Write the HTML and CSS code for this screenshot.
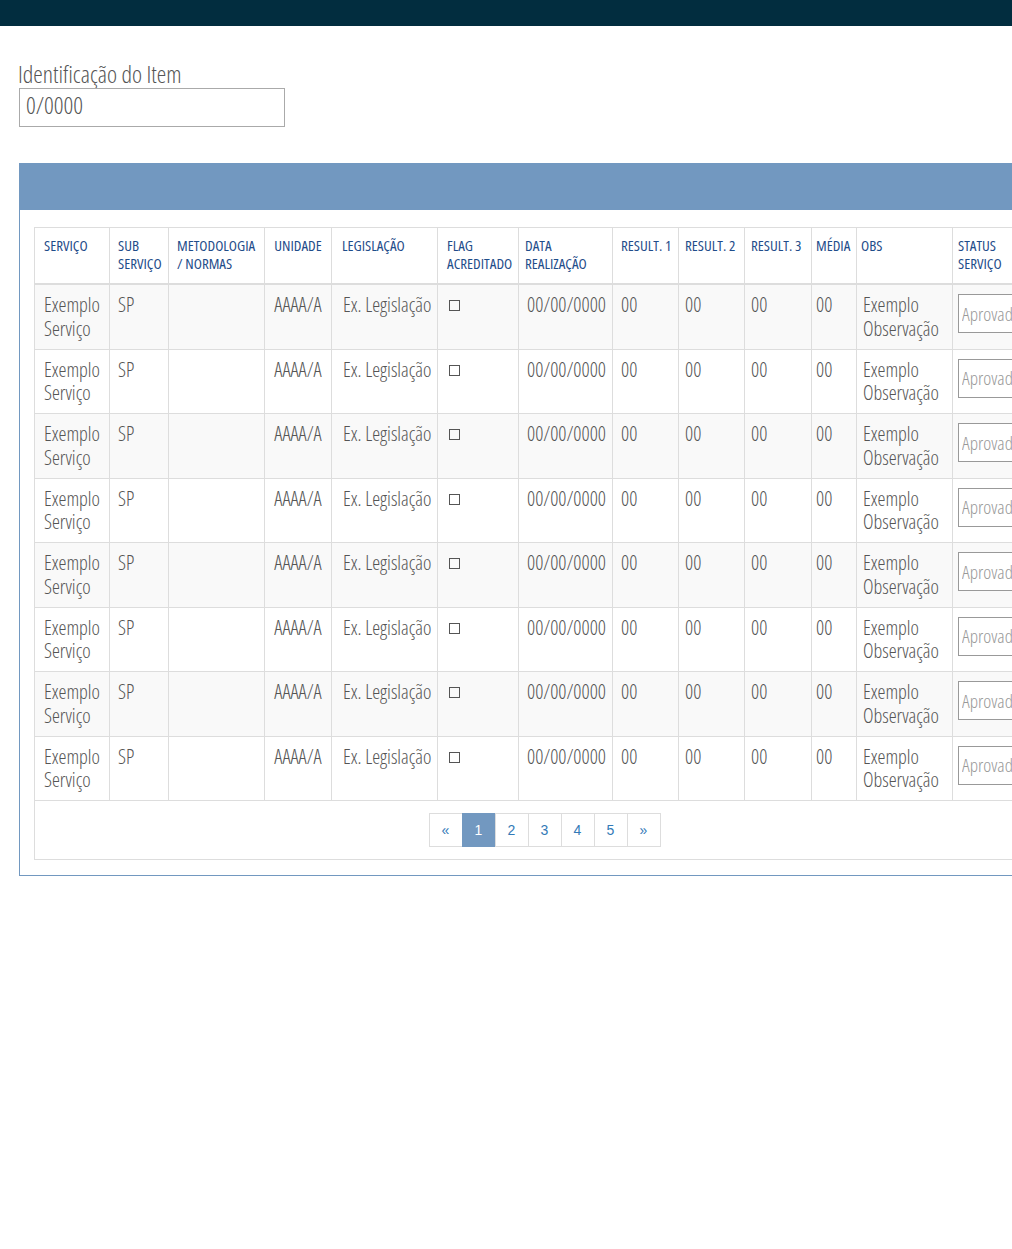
FILE: index.html
```html
<!DOCTYPE html>
<html lang="pt-BR">
<head>
<meta charset="utf-8">
<title>Identificação do Item</title>
<link rel="stylesheet" href="styles.css">
</head>
<body>
<header class="topbar"></header>
<main class="content">
  <div class="field">
    <label class="field-label" for="item-id">Identificação do Item</label>
    <input class="field-input" id="item-id" type="text" value="0/0000">
  </div>

  <section class="panel">
    <div class="panel-heading"></div>
    <div class="panel-body">
      <div class="table-box">
        <table class="grid">
          <colgroup>
            <col class="c-serv"><col class="c-sub"><col class="c-met"><col class="c-uni"><col class="c-leg"><col class="c-flag"><col class="c-data"><col class="c-r1"><col class="c-r2"><col class="c-r3"><col class="c-med"><col class="c-obs"><col class="c-status">
          </colgroup>
          <thead>
            <tr>
              <th>SERVIÇO</th>
              <th>SUB SERVIÇO</th>
              <th>METODOLOGIA / NORMAS</th>
              <th class="ctr">UNIDADE</th>
              <th>LEGISLAÇÃO</th>
              <th>FLAG ACREDITADO</th>
              <th>DATA REALIZAÇÃO</th>
              <th>RESULT. 1</th>
              <th>RESULT. 2</th>
              <th>RESULT. 3</th>
              <th>MÉDIA</th>
              <th>OBS</th>
              <th class="th-status">STATUS SERVIÇO</th>
            </tr>
          </thead>
          <tbody>
            <tr><td>Exemplo Serviço</td><td>SP</td><td></td><td class="ctr">AAAA/A</td><td>Ex. Legislação</td><td><span class="check"></span></td><td>00/00/0000</td><td>00</td><td>00</td><td>00</td><td>00</td><td>Exemplo Observação</td><td class="st"><input class="status-input" type="text" placeholder="Aprovado"></td></tr>
            <tr><td>Exemplo Serviço</td><td>SP</td><td></td><td class="ctr">AAAA/A</td><td>Ex. Legislação</td><td><span class="check"></span></td><td>00/00/0000</td><td>00</td><td>00</td><td>00</td><td>00</td><td>Exemplo Observação</td><td class="st"><input class="status-input" type="text" placeholder="Aprovado"></td></tr>
            <tr><td>Exemplo Serviço</td><td>SP</td><td></td><td class="ctr">AAAA/A</td><td>Ex. Legislação</td><td><span class="check"></span></td><td>00/00/0000</td><td>00</td><td>00</td><td>00</td><td>00</td><td>Exemplo Observação</td><td class="st"><input class="status-input" type="text" placeholder="Aprovado"></td></tr>
            <tr><td>Exemplo Serviço</td><td>SP</td><td></td><td class="ctr">AAAA/A</td><td>Ex. Legislação</td><td><span class="check"></span></td><td>00/00/0000</td><td>00</td><td>00</td><td>00</td><td>00</td><td>Exemplo Observação</td><td class="st"><input class="status-input" type="text" placeholder="Aprovado"></td></tr>
            <tr><td>Exemplo Serviço</td><td>SP</td><td></td><td class="ctr">AAAA/A</td><td>Ex. Legislação</td><td><span class="check"></span></td><td>00/00/0000</td><td>00</td><td>00</td><td>00</td><td>00</td><td>Exemplo Observação</td><td class="st"><input class="status-input" type="text" placeholder="Aprovado"></td></tr>
            <tr><td>Exemplo Serviço</td><td>SP</td><td></td><td class="ctr">AAAA/A</td><td>Ex. Legislação</td><td><span class="check"></span></td><td>00/00/0000</td><td>00</td><td>00</td><td>00</td><td>00</td><td>Exemplo Observação</td><td class="st"><input class="status-input" type="text" placeholder="Aprovado"></td></tr>
            <tr><td>Exemplo Serviço</td><td>SP</td><td></td><td class="ctr">AAAA/A</td><td>Ex. Legislação</td><td><span class="check"></span></td><td>00/00/0000</td><td>00</td><td>00</td><td>00</td><td>00</td><td>Exemplo Observação</td><td class="st"><input class="status-input" type="text" placeholder="Aprovado"></td></tr>
            <tr><td>Exemplo Serviço</td><td>SP</td><td></td><td class="ctr">AAAA/A</td><td>Ex. Legislação</td><td><span class="check"></span></td><td>00/00/0000</td><td>00</td><td>00</td><td>00</td><td>00</td><td>Exemplo Observação</td><td class="st"><input class="status-input" type="text" placeholder="Aprovado"></td></tr>
          </tbody>
        </table>
        <nav class="pager-wrap">
          <ul class="pager">
            <li><a href="#">«</a></li>
            <li class="active"><a href="#">1</a></li>
            <li><a href="#">2</a></li>
            <li><a href="#">3</a></li>
            <li><a href="#">4</a></li>
            <li><a href="#">5</a></li>
            <li><a href="#">»</a></li>
          </ul>
        </nav>
      </div>
    </div>
  </section>
</main>
</body>
</html>
```

FILE: styles.css
```css
html, body {
  margin: 0;
  padding: 0;
}
body {
  overflow-x: hidden;
  background: #fff;
  font-family: "Open Sans", "DejaVu Sans", sans-serif;
  font-stretch: 75%;
  font-weight: 300;
  color: #555;
}
.topbar {
  height: 26px;
  background: #022d3f;
}
.content {
  padding: 34px 0 0 19px;
}
.field {
  display: flex;
  flex-direction: column;
  align-items: flex-start;
}
.field-label {
  font-size: 24px;
  line-height: 28px;
  color: #555;
  margin-left: -1px;
}
.field-input {
  box-sizing: border-box;
  width: 266px;
  height: 39px;
  margin: 0;
  padding: 0 6px 6px;
  border: 1px solid #aaa;
  border-radius: 0;
  font-family: inherit;
  font-stretch: 75%;
  font-weight: 300;
  font-size: 24px;
  color: #555;
  outline: none;
}
.panel {
  margin-top: 36px;
  width: 1053px;
  border: 1px solid #7298c0;
  border-top: 0;
  box-sizing: border-box;
}
.panel-heading {
  height: 47px;
  background: #7298c0;
  margin-left: -1px;
  margin-right: -1px;
}
.panel-body {
  padding: 17px 15px 15px 14px;
}
.table-box {
  border: 1px solid #ddd;
  width: 1021px;
  box-sizing: border-box;
}
.grid {
  table-layout: fixed;
  border-collapse: collapse;
  margin: -1px;
  width: calc(100% + 2px);
}
.c-serv { width: 75px; }
.c-sub { width: 59px; }
.c-met { width: 96px; }
.c-uni { width: 67px; }
.c-leg { width: 106px; }
.c-flag { width: 81px; }
.c-data { width: 94px; }
.c-r1 { width: 66px; }
.c-r2 { width: 66px; }
.c-r3 { width: 67px; }
.c-med { width: 45px; }
.c-obs { width: 96px; }
.c-status { width: 103px; }
.grid th {
  border: 1px solid #ddd;
  border-bottom: 2px solid #ddd;
  padding: 8px 2px 11px 8px;
  text-align: left;
  vertical-align: top;
  font-size: 15px;
  line-height: 18px;
  font-weight: 500;
  color: #1f4d8a;
}
.grid td {
  border: 1px solid #ddd;
  padding: 8px 4px 8px 8px;
  vertical-align: top;
  font-size: 20px;
  line-height: 23.75px;
  color: #555;
}
.grid th:nth-child(1), .grid td:nth-child(1) { padding-left: 9px; }
.grid th:nth-child(3) { padding-right: 6px; }
.grid td:nth-child(3) { padding-left: 9px; }
.grid th:nth-child(5) { padding-left: 10px; }
.grid td:nth-child(5) { padding-left: 11px; }
.grid th:nth-child(6) { padding-left: 9px; }
.grid td:nth-child(6) { padding-left: 9px; }
.grid th:nth-child(7) { padding-left: 6px; }
.grid th:nth-child(9), .grid td:nth-child(9) { padding-left: 6px; }
.grid th:nth-child(10), .grid td:nth-child(10) { padding-left: 6px; }
.grid th:nth-child(11), .grid td:nth-child(11) { padding-left: 4px; }
.grid th:nth-child(12) { padding-left: 4px; }
.grid td:nth-child(12) { padding-left: 6px; }
.grid th.th-status { padding-left: 5px; padding-right: 20px; }
.grid tbody tr:nth-child(odd) td {
  background: #f9f9f9;
}
.grid .ctr {
  text-align: center;
  padding-left: 4px;
  padding-right: 4px;
}
.grid td.st {
  padding: 8px 0 8px 5px;
}
.check {
  display: inline-block;
  width: 9px;
  height: 9px;
  border: 1px solid #555;
  margin: 7px 0 0 2px;
  vertical-align: top;
}
.status-input {
  display: block;
  box-sizing: border-box;
  width: 100%;
  height: 39px;
  margin: 1px 0 0;
  padding: 0 3px;
  border: 1px solid #999;
  border-right: 0;
  font-family: inherit;
  font-stretch: 75%;
  font-weight: 300;
  font-size: 19px;
  background: #fff;
}
.status-input::placeholder {
  color: #999;
}
.pager-wrap {
  display: flex;
  justify-content: center;
  padding: 13px 0 12px;
}
.pager {
  display: flex;
  list-style: none;
  margin: 0;
  padding: 0;
  font-family: "Liberation Sans", Arial, sans-serif;
  font-stretch: normal;
  font-weight: 400;
  font-size: 14px;
}
.pager li a {
  display: block;
  width: 34px;
  height: 34px;
  box-sizing: border-box;
  line-height: 32px;
  text-align: center;
  border: 1px solid #ddd;
  margin-left: -1px;
  color: #337ab7;
  text-decoration: none;
  background: #fff;
}
.pager li:first-child a {
  margin-left: 0;
}
.pager li.active a {
  background: #7298c0;
  border-color: #7298c0;
  color: #fff;
}
```
